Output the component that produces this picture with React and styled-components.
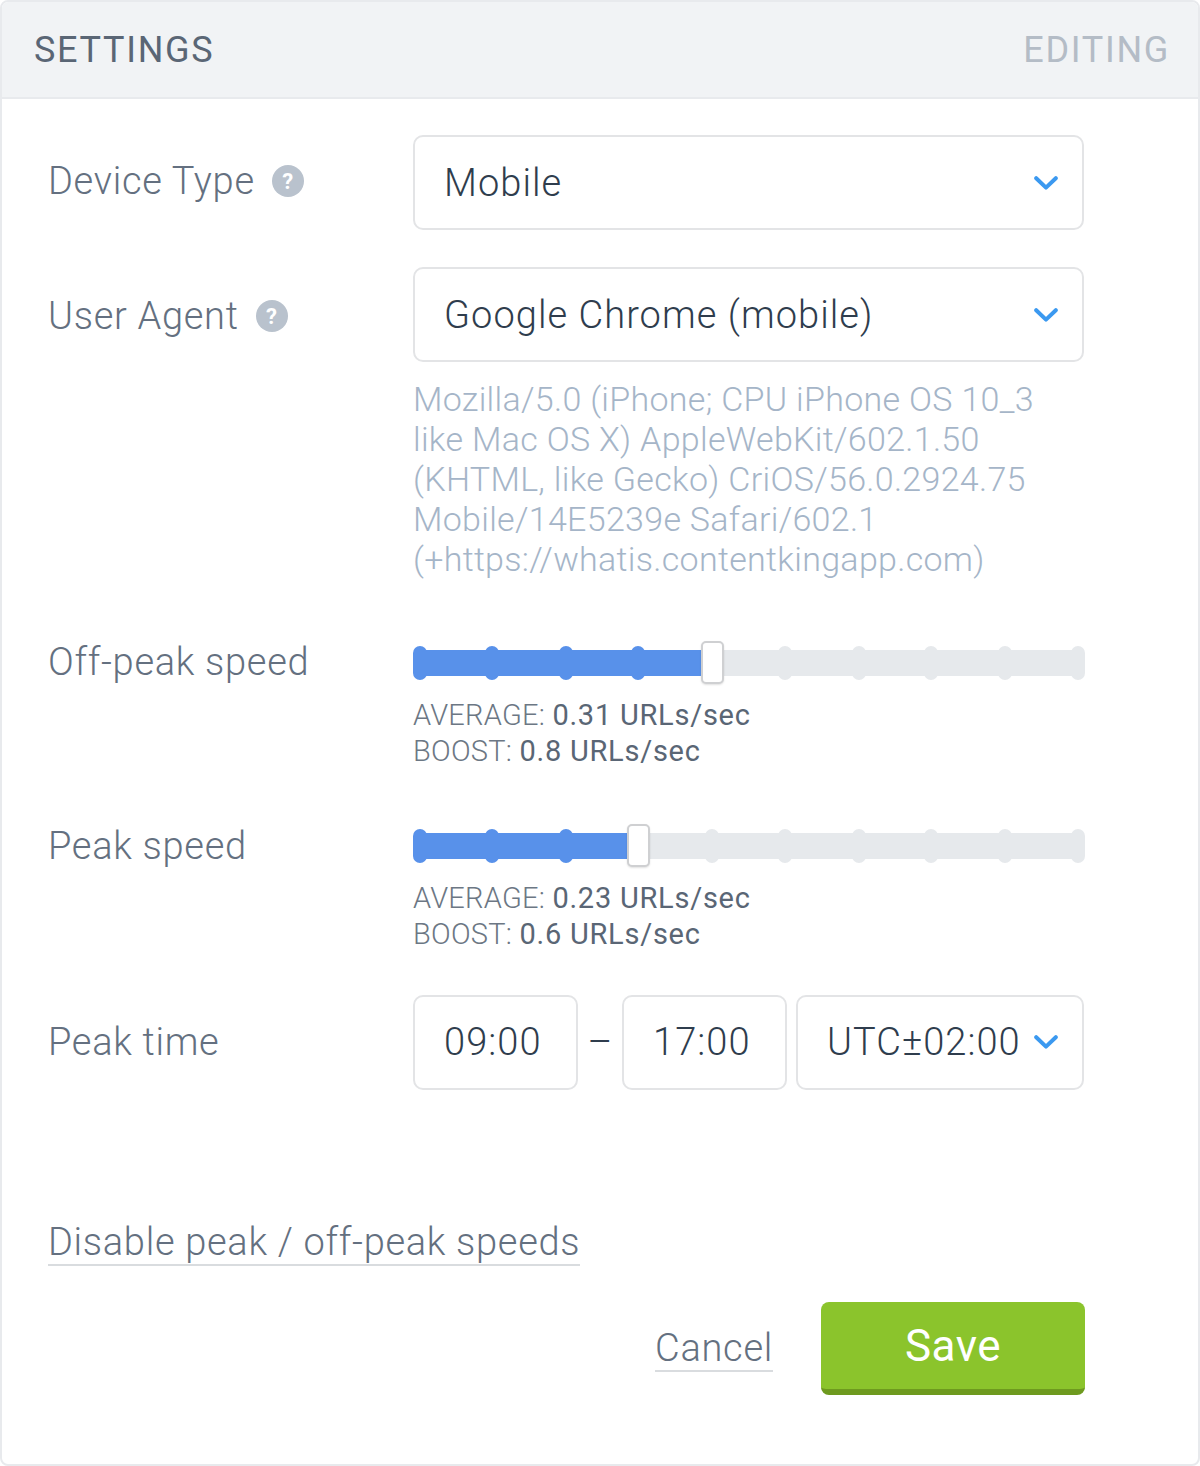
import React from "react";
import styled, { createGlobalStyle } from "styled-components";

const Global = createGlobalStyle`
  html, body { margin: 0; padding: 0; background: #fff; }
  body { font-family: Roboto, "Liberation Sans", sans-serif; font-weight: 300; }
  * { box-sizing: border-box; }
`;
const Card = styled.div`
  width: 1200px; height: 1466px; border: 2px solid #e8eaed; border-radius: 8px; overflow: hidden; background: #fff;
  display: flex; flex-direction: column;
`;
const Header = styled.div`
  height: 97px; background: #f1f3f5; border-bottom: 2px solid #e8eaed;
  display: flex; align-items: center; justify-content: space-between; padding: 0 28px 0 32px;
  font-size: 36px; font-weight: 400; letter-spacing: 1.7px;
`;
const Title = styled.span`color: #5a6675;`;
const Mode = styled.span`color: #b4bcc6;`;
const Body = styled.div`
  flex: 1; display: flex; flex-direction: column; padding: 36px 113px 0 46px;
`;
const Row = styled.div`
  display: grid; grid-template-columns: 365px 672px; margin-bottom: ${p => p.$mb || 0}px;
`;
const Label = styled.div`
  display: flex; align-items: center; gap: 17px; font-size: 38px; letter-spacing: 0.7px; color: #647080; height: ${p => p.$h || 92}px;
`;
const Help = styled.span`
  width: 32px; height: 32px; border-radius: 50%; background: #b9c2cd; color: #fff; font-size: 22px; font-weight: 700; letter-spacing: 0;
  display: flex; align-items: center; justify-content: center;
`;
const Box = styled.div`
  height: 95px; border: 2px solid #e3e4e6; border-radius: 10px; background: #fff; display: flex; align-items: center;
  justify-content: space-between; font-size: 38px; letter-spacing: 1.05px; color: #2f3d4d; padding: 0 24px 0 29px;
  width: ${p => p.$w || "671px"}; flex: none;
`;
const Hint = styled.div`
  margin-top: 17px; font-size: 34px; letter-spacing: 0.3px; line-height: 40px; color: #a5b5c8;
`;
const Track = styled.div`
  position: relative; height: 26px; margin-top: 23px; border-radius: 8px; background: #e6e9ec;
`;
const Fill = styled.div`
  position: absolute; left: 0; top: 0; bottom: 0; border-radius: 8px 0 0 8px; background: #5891ea;
`;
const Dot = styled.span`
  position: absolute; top: -4px; width: 14px; height: 34px; border-radius: 7px; margin-left: -7px; background: ${p => p.$on ? "#5891ea" : "#e6e9ec"};
`;
const Thumb = styled.span`
  position: absolute; top: -9px; width: 23px; height: 43px; margin-left: -11px; border-radius: 5px; background: #fff; border: 2px solid #cfd0d2;
  box-shadow: 0 1px 2px rgba(0, 0, 0, 0.12);
`;
const Stats = styled.div`
  margin-top: 21px; font-size: 29px; letter-spacing: 0.25px; line-height: 36px; color: #6c7784;
  b { font-weight: 400; color: #5a6675; letter-spacing: 0.75px; }
`;
const TimeRow = styled.div`display: flex; align-items: center; width: 672px;`;
const Dash = styled.span`
  width: 44px; flex: none; text-align: center; font-size: 38px; color: #2f3d4d;
`;
const TzBox = styled(Box)`margin-left: 9px;`;
const Link = styled.span`
  display: inline-block; font-size: 38px; letter-spacing: 0.7px; line-height: 44px; color: #647080; border-bottom: 2px solid #d9dcdf;
`;
const Disable = styled.div`margin-top: 130px;`;
const Actions = styled.div`
  display: flex; justify-content: flex-end; align-items: center; gap: 48px; margin-top: 36px;
`;
const Save = styled.div`
  width: 264px; height: 93px; border-radius: 8px; background: #8bc42c; border-bottom: 6px solid #6e9a1f; color: #fff;
  display: flex; align-items: center; justify-content: center; font-size: 44px; letter-spacing: 0.5px; font-weight: 400;
`;

const Chevron = () => (
  <svg width="24" height="14" viewBox="0 0 24 14" fill="none">
    <path d="M2.2 2.2L12 11.6L21.8 2.2" stroke="#3b99f0" strokeWidth="4" strokeLinecap="round" strokeLinejoin="round" />
  </svg>
);

const stops = [7, 79, 153, 225, 299, 372, 446, 518, 592, 665];
const Slider = ({ value }) => (
  <Track>
    <Fill style={{ width: value }} />
    {stops.map(s => <Dot key={s} $on={s < value} style={{ left: s }} />)}
    <Thumb style={{ left: value }} />
  </Track>
);

export default function App() {
  return (
    <Card>
      <Global />
      <Header><Title>SETTINGS</Title><Mode>EDITING</Mode></Header>
      <Body>
        <Row $mb={37}>
          <Label>Device Type <Help>?</Help></Label>
          <Box>Mobile <Chevron /></Box>
        </Row>
        <Row $mb={48}>
          <Label $h={98}>User Agent <Help>?</Help></Label>
          <div>
            <Box>Google Chrome (mobile) <Chevron /></Box>
            <Hint>Mozilla/5.0 (iPhone; CPU iPhone OS 10_3<br />like Mac OS X) AppleWebKit/602.1.50<br />(KHTML, like Gecko) CriOS/56.0.2924.75<br />Mobile/14E5239e Safari/602.1<br />(+https://whatis.contentkingapp.com)</Hint>
          </div>
        </Row>
        <Row $mb={41}>
          <Label $h={70}>Off-peak speed</Label>
          <div>
            <Slider value={299} />
            <Stats>AVERAGE: <b>0.31 URLs/sec</b><br />BOOST: <b>0.8 URLs/sec</b></Stats>
          </div>
        </Row>
        <Row $mb={42}>
          <Label $h={72}>Peak speed</Label>
          <div>
            <Slider value={225} />
            <Stats>AVERAGE: <b>0.23 URLs/sec</b><br />BOOST: <b>0.6 URLs/sec</b></Stats>
          </div>
        </Row>
        <Row>
          <Label $h={96}>Peak time</Label>
          <TimeRow>
            <Box $w="165px">09:00</Box>
            <Dash>–</Dash>
            <Box $w="165px">17:00</Box>
            <TzBox $w="288px">UTC±02:00 <Chevron /></TzBox>
          </TimeRow>
        </Row>
        <Disable><Link>Disable peak / off-peak speeds</Link></Disable>
        <Actions><Link>Cancel</Link><Save>Save</Save></Actions>
      </Body>
    </Card>
  );
}
